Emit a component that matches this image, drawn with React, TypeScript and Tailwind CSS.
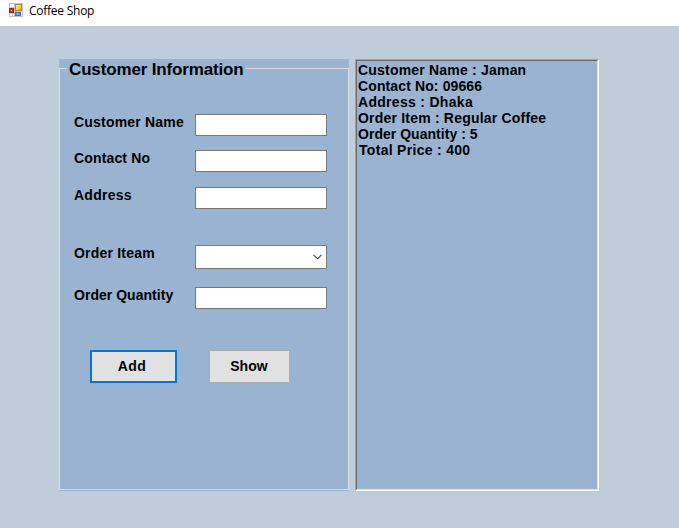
import type { ReactNode } from "react";

function FormIcon() {
  return (
    <svg width="14" height="14" viewBox="0 0 14 14" shapeRendering="crispEdges">
      <defs>
        <linearGradient id="gold" x1="0" y1="0" x2="1" y2="1">
          <stop offset="0" stopColor="#fff0a0" />
          <stop offset="1" stopColor="#e8ae10" />
        </linearGradient>
      </defs>
      <rect width="14" height="14" fill="#c4c4c4" />
      <rect x="1" y="1" width="4" height="3" fill="#fff" />
      <rect x="1" y="11" width="2" height="2" fill="#fff" />
      <rect x="4" y="11" width="1" height="2" fill="#fff" />
      <rect x="12" y="9" width="1" height="4" fill="#fff" />
      <rect x="6" y="1" width="7" height="7" fill="#b98b13" />
      <rect x="7" y="2" width="5" height="5" fill="url(#gold)" />
      <rect x="0" y="5" width="5" height="5" fill="#9c1b12" />
      <rect x="1" y="6" width="3" height="3" fill="#d3392b" />
      <rect x="2" y="7" width="1" height="1" fill="#ffc0b0" />
      <rect x="6" y="9" width="6" height="4" fill="#3567c4" />
      <rect x="7" y="10" width="4" height="2" fill="#6fa3f5" />
    </svg>
  );
}

function Row({ label, top, tracking, children }: { label: string; top: string; tracking: string; children: ReactNode }) {
  return (
    <div className={`flex ${top}`}>
      <span className={`w-[121px] shrink-0 whitespace-nowrap text-[14px] leading-4 ${tracking}`}>{label}</span>
      {children}
    </div>
  );
}

function TextBox() {
  return <input className="block h-[22px] w-[132px] border border-[#7a7a7a] bg-white px-1 outline-none" />;
}

const lines = [
  { text: "Customer Name : Jaman", cls: "tracking-[0.2px]" },
  { text: "Contact No: 09666", cls: "tracking-[0.12px]" },
  { text: "Address : Dhaka", cls: "tracking-[0.3px]" },
  { text: "Order Item : Regular Coffee", cls: "tracking-[0.2px]" },
  { text: "Order Quantity : 5", cls: "tracking-[0.03px]" },
  { text: "Total Price : 400", cls: "pl-px tracking-[0.3px]" },
];

export default function App() {
  return (
    <div className="flex h-[528px] w-[679px] flex-col overflow-hidden bg-[#bfccda] font-['Liberation_Sans',Arial,sans-serif] text-black">
      <header className="flex h-[26px] shrink-0 items-start bg-white pl-[9px] pt-[3px]">
        <FormIcon />
        <span className="ml-[6px] font-['Open_Sans','Noto_Sans',sans-serif] text-[12px] leading-4 tracking-[-0.25px]">Coffee Shop</span>
      </header>
      <main className="flex gap-[6px] pl-[59px] pt-[33px] font-bold">
        <section className="h-[432px] w-[290px] bg-[#99b3d1]">
          <div className="flex h-[10px] items-end">
            <div className="h-px w-[7px] bg-[#dcdcdc]" />
            <h1 className="h-[10px] w-[180px] whitespace-nowrap pl-[3px] text-[17px] leading-[21px] tracking-[-0.15px]">Customer Information</h1>
            <div className="h-px flex-1 bg-[#dcdcdc]" />
          </div>
          <div className="h-[421px] border-x border-b border-[#dcdcdc] pl-[14px] pt-[45px]">
            <Row label="Customer Name" top="" tracking="tracking-[0.2px]"><TextBox /></Row>
            <Row label="Contact No" top="mt-[14px]" tracking="tracking-[0.15px]"><TextBox /></Row>
            <Row label="Address" top="mt-[15px]" tracking="tracking-[0.25px]"><TextBox /></Row>
            <Row label="Order Iteam" top="mt-9" tracking="tracking-[0.2px]">
              <button aria-label="Order item" className="flex h-6 w-[132px] items-center justify-end border border-[#7a7a7a] bg-white pr-1">
                <svg width="9" height="6" viewBox="0 0 9 6" fill="none" stroke="#444" strokeWidth="1.1">
                  <path d="M0.5 0.8 4.5 4.8 8.5 0.8" />
                </svg>
              </button>
            </Row>
            <Row label="Order Quantity" top="mt-[18px]" tracking="tracking-[0.03px]"><TextBox /></Row>
            <div className="ml-4 mt-[41px] flex gap-8 text-[14px]">
              <button className="h-[33px] w-[87px] border-2 border-[#0078d7] bg-[#e1e1e1] pr-[3px] tracking-[0.4px]">Add</button>
              <button className="h-[33px] w-[81px] border border-[#adadad] bg-[#e1e1e1] pr-px tracking-[0.1px]">Show</button>
            </div>
          </div>
        </section>
        <section className="h-[432px] w-[244px] border border-b-white border-l-[#a0a0a0] border-r-white border-t-[#a0a0a0] bg-[#99b3d1]">
          <div className="h-full border border-b-[#e3e3e3] border-l-[#696969] border-r-[#e3e3e3] border-t-[#696969] pl-px pt-px">
            {lines.map((l) => (
              <p key={l.text} className={`h-4 whitespace-nowrap text-[14px] leading-4 ${l.cls}`}>{l.text}</p>
            ))}
          </div>
        </section>
      </main>
    </div>
  );
}
